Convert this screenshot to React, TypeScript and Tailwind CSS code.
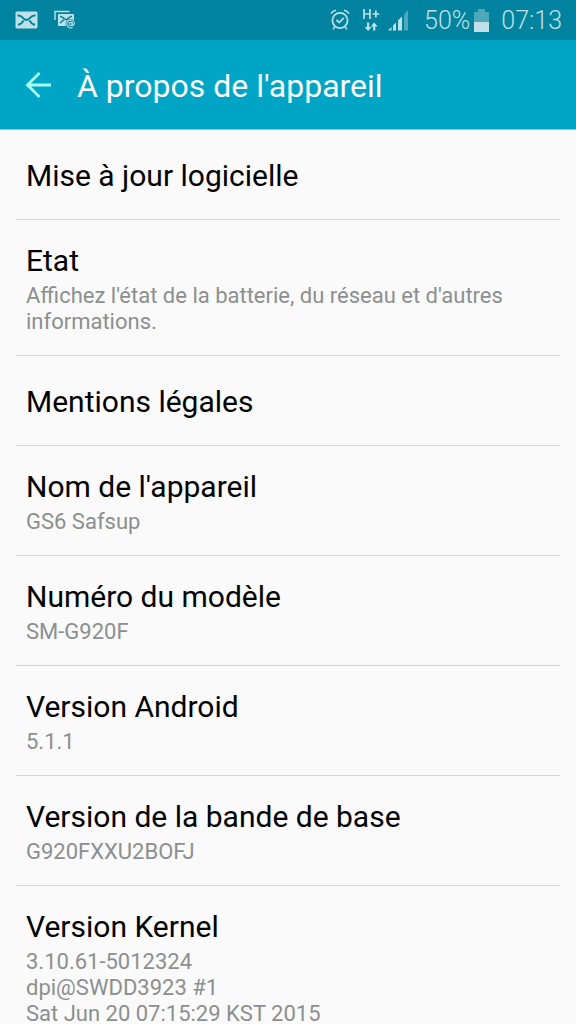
import React from "react";

type Item = { title: string; lines?: string[] };

const items: Item[] = [
  { title: "Mise à jour logicielle" },
  { title: "Etat", lines: ["Affichez l'état de la batterie, du réseau et d'autres informations."] },
  { title: "Mentions légales" },
  { title: "Nom de l'appareil", lines: ["GS6 Safsup"] },
  { title: "Numéro du modèle", lines: ["SM-G920F"] },
  { title: "Version Android", lines: ["5.1.1"] },
  { title: "Version de la bande de base", lines: ["G920FXXU2BOFJ"] },
  { title: "Version Kernel", lines: ["3.10.61-5012324", "dpi@SWDD3923 #1", "Sat Jun 20 07:15:29 KST 2015"] },
];

function MailIcon() {
  return (
    <svg width="24" height="18" viewBox="0 0 24 18" aria-hidden="true">
      <rect x="1.5" y="0.5" width="22" height="17" rx="1.5" fill="#bfe0e7" />
      <path d="M3.5 4.2Q7 4.4 9.5 7.4Q12.5 10.4 15.5 7.4Q18 4.4 21.5 4.2M4 13.8Q7.4 13.4 9.6 9.6M21 13.8Q17.6 13.4 15.4 9.6" fill="none" stroke="#00839e" strokeWidth="1.9" />
    </svg>
  );
}

function MailStackIcon() {
  return (
    <svg width="22" height="20" viewBox="0 0 22 20" aria-hidden="true">
      <path d="M1 10V1.5H15.5" fill="none" stroke="#bfe0e7" strokeWidth="1.4" />
      <rect x="4" y="4" width="16" height="12" rx="0.8" fill="#bfe0e7" />
      <path d="M6 6.2Q9 7 10.4 8.8Q12 10.4 13.6 8.8Q15 7 18 6.2M6 13.2L10 9.5" fill="none" stroke="#00839e" strokeWidth="1.5" />
      <circle cx="16.6" cy="14" r="5" fill="#00839e" />
      <circle cx="16.6" cy="14" r="1.6" fill="none" stroke="#bfe0e7" strokeWidth="1.1" />
      <path d="M18.2 12.2V14.6Q18.4 15.8 19.6 15.2Q20.8 14 20.2 12.4A3.9 3.9 0 1 0 18.6 17.4" fill="none" stroke="#bfe0e7" strokeWidth="1.1" />
    </svg>
  );
}

function AlarmIcon() {
  return (
    <svg width="20" height="22" viewBox="0 0 20 22" fill="none" stroke="#bfe0e7" aria-hidden="true">
      <circle cx="10" cy="11.5" r="7.6" strokeWidth="1.7" />
      <path d="M6.4 10.8L9.2 13.6L13.8 8.8" strokeWidth="1.7" />
      <path d="M1 4.6Q2.6 1.8 6 1.2M19 4.6Q17.4 1.8 14 1.2M4.8 17.6L3.2 20.4M15.2 17.6L16.8 20.4" strokeWidth="1.6" />
    </svg>
  );
}

function DataIcon() {
  return (
    <svg width="18" height="24" viewBox="0 0 18 24" aria-hidden="true">
      <path d="M2 1V11M8 1V11M2 6H8M10.5 6H17.3M13.9 2.6V9.4" fill="none" stroke="#bfe0e7" strokeWidth="1.7" />
      <path d="M5 14.5H7.2V19H9.6L6.1 23L2.6 19H5ZM11.1 22.5H13.3V18.5H15.7L12.2 14.5L8.7 18.5H11.1Z" fill="#bfe0e7" />
    </svg>
  );
}

function SignalIcon() {
  return (
    <svg width="22" height="22" viewBox="0 0 22 22" aria-hidden="true">
      <path d="M0 21.5L3.5 18V21.5ZM5 16.5L8 13.5V21.5H5ZM10 11.5L14 7.5V21.5H10Z" fill="#bfe0e7" />
      <path d="M16 5.5L20 1V21.5H16Z" fill="#4da8bb" />
    </svg>
  );
}

function BatteryIcon() {
  return (
    <svg width="15" height="23" viewBox="0 0 15 23" aria-hidden="true">
      <path d="M4 0H11V3H15V13H0V3H4Z" fill="#4da8bb" />
      <path d="M0 13H15V23H0Z" fill="#bfe0e7" />
    </svg>
  );
}

export default function App() {
  return (
    <div className="flex h-screen flex-col bg-[#fafafa] font-[Roboto,sans-serif]">
      <div className="flex h-10 shrink-0 items-center justify-between bg-[#00839e] pl-[14px] pr-[14px] text-[#bfe0e7]">
        <div className="flex items-center gap-4">
          <MailIcon />
          <MailStackIcon />
        </div>
        <div className="flex items-center">
          <AlarmIcon />
          <span className="ml-3 flex"><DataIcon /></span>
          <span className="ml-2 flex"><SignalIcon /></span>
          <span className="ml-3.5 pt-0.5 text-[25px] font-light leading-10">50%</span>
          <span className="ml-1 flex"><BatteryIcon /></span>
          <span className="ml-3 pt-0.5 text-[25px] font-light leading-10">07:13</span>
        </div>
      </div>
      <header className="flex h-[90px] shrink-0 items-center border-b border-[#a9bfc6] bg-[#00a5c5] pl-[25px] pr-4">
        <button type="button" aria-label="Retour" className="flex">
          <svg width="28" height="28" viewBox="0 0 28 28" fill="none" stroke="#a8fff6" strokeWidth="2.8" aria-hidden="true">
            <path d="M26 14H3M14.5 2L2.5 14L14.5 26" />
          </svg>
        </button>
        <h1 className="ml-6 pt-0.5 text-[32px] leading-10 text-[#fafafa]">À propos de l'appareil</h1>
      </header>
      <main className="min-h-0 flex-1 overflow-y-auto px-4 [scrollbar-width:none]">
        <ul>
          {items.map((item) => (
            <li key={item.title} className="border-b border-[#d4d4d4]">
              <button
                type="button"
                className={item.lines ? "block w-full px-[10px] pb-5 pt-[23px] text-left" : "block w-full px-[10px] pb-[25px] pt-7 text-left"}
              >
                <span className="block text-[30px] leading-9 text-black">{item.title}</span>
                {item.lines && (
                  <span className="mt-1 block text-[22px] leading-[26px] text-[#8c8f90]">
                    {item.lines.map((line) => (
                      <span key={line} className="block">{line}</span>
                    ))}
                  </span>
                )}
              </button>
            </li>
          ))}
        </ul>
      </main>
    </div>
  );
}
